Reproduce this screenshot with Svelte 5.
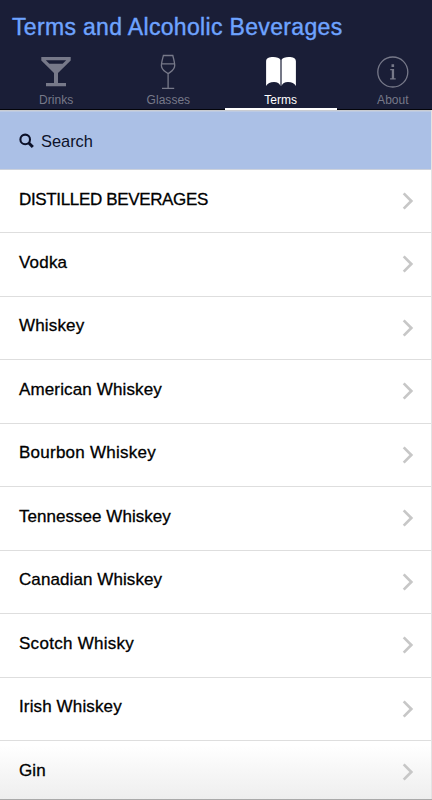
<script>
  const tabs = ['Drinks', 'Glasses', 'Terms', 'About'];
  const active = 'Terms';
  const terms = [
    { name: 'DISTILLED BEVERAGES', spacing: -0.35 },
    { name: 'Vodka', spacing: 0.2 },
    { name: 'Whiskey', spacing: 0.15 },
    { name: 'American Whiskey', spacing: 0.14 },
    { name: 'Bourbon Whiskey', spacing: 0.25 },
    { name: 'Tennessee Whiskey', spacing: 0.04 },
    { name: 'Canadian Whiskey', spacing: 0.09 },
    { name: 'Scotch Whisky', spacing: 0.28 },
    { name: 'Irish Whiskey', spacing: 0.13 },
    { name: 'Gin', spacing: 0.1 }
  ];
</script>

<div class="app">
  <header>
    <h1>Terms and Alcoholic Beverages</h1>
    <nav>
      {#each tabs as tab}
        <button class="tab" class:active={tab === active}>
          <svg width="36" height="36" viewBox="0 0 36 36" fill="none" stroke="currentColor">
            {#if tab === 'Drinks'}
              <path fill="currentColor" stroke="none" fill-rule="evenodd" d="M3.3 3h29.4v3.4L20 19v10h8v3.2H8V29h8V19L3.3 6.4ZM7.8 6.3l3.6 3.5h13.2l3.6-3.5Z" />
            {:else if tab === 'Glasses'}
              <path stroke-width="1.3" d="M13.4 1.5h9.4c1 3.8 1.9 7.3 1.9 9.9 0 4.4-3.2 5.7-6.6 8.4-3.4-2.7-6.7-4-6.7-8.4 0-2.6 1-6.1 2-9.9ZM11.6 9.9h13M18.1 19.8v14M12 34.3h12.2" />
            {:else if tab === 'Terms'}
              <path fill="currentColor" stroke="none" d="M3.1 7.2C3.1 4.2 6 3 10.3 3c3.4 0 6.2.8 7.1 2.8v26.1c-.8-2.5-3-4-6.4-4-3.8 0-6.4 1.2-7.9 4ZM32.9 7.2C32.9 4.2 30 3 25.7 3c-3.4 0-6.2.8-7.1 2.8v26.1c.8-2.5 3-4 6.4-4 3.8 0 6.4 1.2 7.9 4Z" />
            {:else}
              <circle cx="17.8" cy="18" r="15" stroke-width="1.3" />
              <path fill="currentColor" stroke="none" d="M16.5 10.2h2.6v2.7h-2.6ZM15.2 15h3.9v9.2h1.6v1.2h-5.6v-1.2h1.7v-7.9h-1.6Z" />
            {/if}
          </svg>
          <span>{tab}</span>
        </button>
      {/each}
    </nav>
  </header>

  <main>
    <div class="search">
      <svg width="16" height="16" viewBox="0 0 16 16" fill="none" stroke="currentColor">
        <circle cx="6.2" cy="6.4" r="4.8" stroke-width="2.1" />
        <path d="m9.8 10 4 4" stroke-width="3" />
      </svg>
      <span>Search</span>
    </div>
    <ul>
      {#each terms as term}
        <li>
          <span style="letter-spacing: {term.spacing}px">{term.name}</span>
          <svg width="12" height="18" viewBox="0 0 12 18" fill="none" stroke="#c7c7c7" stroke-width="2.7">
            <path d="m1.7 1.4 7.6 7.6-7.6 7.6" />
          </svg>
        </li>
      {/each}
    </ul>
  </main>
</div>

<style>
  :global(body) {
    margin: 0;
    overflow: hidden;
  }
  .app {
    width: 432px;
    height: 800px;
    box-sizing: border-box;
    overflow: hidden;
    display: flex;
    flex-direction: column;
    background: #fff;
    font-family: "Liberation Sans", Arial, sans-serif;
    border-bottom: 1px solid #a9a9a9;
  }
  header {
    height: 110px;
    flex: none;
    box-sizing: border-box;
    background: #1a1e37;
    border-bottom: 1px solid #03040a;
    display: flex;
    flex-direction: column;
  }
  h1 {
    height: 54px;
    margin: 0;
    padding-left: 12px;
    font-size: 23px;
    line-height: 54px;
    font-weight: 400;
    letter-spacing: 0.33px;
    white-space: nowrap;
    color: #6ea3ff;
    -webkit-text-stroke: 0.4px #6ea3ff;
  }
  nav {
    display: flex;
    width: 449px;
    height: 56px;
    flex: none;
  }
  .tab {
    flex: 1;
    box-sizing: border-box;
    height: 56px;
    padding: 0;
    border: 0;
    border-bottom: 1px solid #03040a;
    background: none;
    color: #777989;
    font: 12px/14px "Liberation Sans", Arial, sans-serif;
    letter-spacing: 0.03px;
    display: flex;
    flex-direction: column;
    align-items: center;
    justify-content: flex-start;
  }
  .tab svg {
    flex: none;
    margin-bottom: 3px;
  }
  .tab.active {
    color: #fff;
    border-bottom: 2px solid #fff;
  }
  main {
    flex: 1;
    min-height: 0;
    margin-right: 1px;
    box-shadow: 1px 0 #e3e3e3;
    border-top: 1px solid #c9ccd2;
  }
  .search {
    height: 58px;
    box-sizing: border-box;
    border-top: 1px solid #bccae4;
    display: flex;
    align-items: center;
    padding: 1px 0 0 19px;
    background: #abc0e6;
    color: #0c1129;
    font-size: 16.4px;
    gap: 6px;
  }
  ul {
    list-style: none;
    margin: 0;
    padding: 0;
    border-top: 1px solid #cdd2dc;
    background: linear-gradient(#fff 575px, #ededed 632px);
  }
  li {
    height: 63.5px;
    box-sizing: border-box;
    border-bottom: 1px solid #dedede;
    display: flex;
    align-items: center;
    justify-content: space-between;
    padding: 0 17px 3px 19px;
    font-size: 17px;
    color: #000;
    -webkit-text-stroke: 0.3px #000;
  }
  li:first-child {
    height: 63px;
  }
  li svg {
    margin-top: 3px;
  }
</style>
